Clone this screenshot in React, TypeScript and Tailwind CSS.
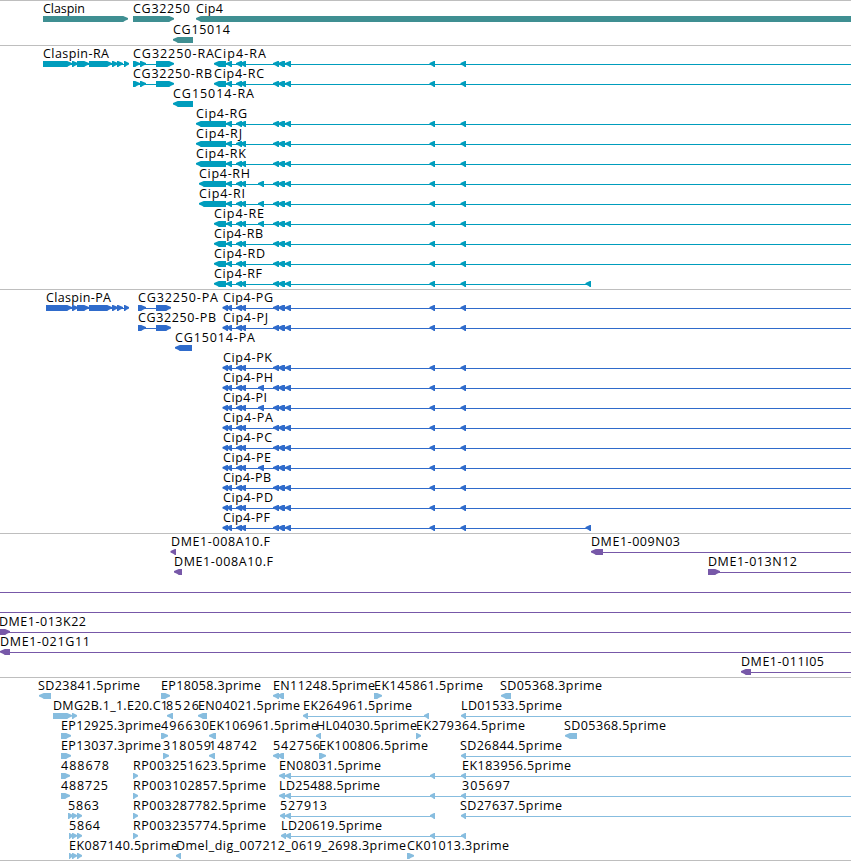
import React from "react";

type Label = [x: number, end: number, text: string];
type Glyph = [start: number, end: number, dir: "L" | "R"];
type Span = [start: number, end: number];
interface Row {
  labels?: Label[];
  glyphs?: Glyph[];
  lines?: Span[];
}

const WIDTH = 851;

// Exons shared by every Cip4 isoform.
const cip4Tail: Glyph[] = [
  [236, 242, "L"], [240, 246, "L"], [273, 279, "L"], [278, 285, "L"],
  [285, 291, "L"], [429.5, 435, "L"], [460.5, 466, "L"],
];
const extraExon: Glyph = [258, 264, "L"];

const cip4R = (suffix: string, start: number, end: number, extra = false, short = false): Row => ({
  labels: [[start, end, "Cip4-R" + suffix]],
  glyphs: [
    [start, 226, "L"], [226, 232, "L"], ...cip4Tail,
    ...(extra ? [extraExon] : []),
    ...(short ? [[585.5, 591, "L"] as Glyph] : []),
  ],
  lines: [[start + 5, short ? 590 : WIDTH]],
});

const cip4P = (suffix: string, end: number, extra = false, short = false): Row => ({
  labels: [[223, end, "Cip4-P" + suffix]],
  glyphs: [
    [222.5, 228, "L"], [226.5, 232, "L"], ...cip4Tail,
    ...(extra ? [extraExon] : []),
    ...(short ? [[585.5, 591, "L"] as Glyph] : []),
  ],
  lines: [[226, short ? 590 : WIDTH]],
});

const merge = (...rows: Row[]): Row => ({
  labels: rows.flatMap((r) => r.labels ?? []),
  glyphs: rows.flatMap((r) => r.glyphs ?? []),
  lines: rows.flatMap((r) => r.lines ?? []),
});

const claspin = (name: string, start: number, end: number): Row => ({
  labels: [[start, end, name]],
  glyphs: [
    [start, 72, "R"], [72, 78, "R"], [77, 89, "R"], [89, 112, "R"],
    [112, 118, "R"], [117, 123, "R"], [124, 129, "R"],
  ],
  lines: [[start + 3, 127]],
});

const cg32250R = (name: string, end: number): Row => ({
  labels: [[133, end, name]],
  glyphs: [[133, 140, "R"], [140, 146, "R"], [156, 174, "R"]],
  lines: [[134, 160]],
});

const cg32250P = (name: string, end: number): Row => ({
  labels: [[138, end, name]],
  glyphs: [[138, 146, "R"], [156, 171, "R"]],
  lines: [[139, 160]],
});

const genes: Row[] = [
  {
    labels: [[43, 85, "Claspin"], [133, 190, "CG32250"], [196, 223, "Cip4"]],
    glyphs: [[43, 128, "R"], [133, 174, "R"], [196, 860, "L"]],
  },
  { labels: [[173, 230, "CG15014"]], glyphs: [[173, 193, "L"]] },
];

const transcripts: Row[] = [
  merge(claspin("Claspin-RA", 43, 109), cg32250R("CG32250-RA", 214), cip4R("A", 214, 266)),
  merge(cg32250R("CG32250-RB", 212), cip4R("C", 214, 264)),
  { labels: [[173, 254, "CG15014-RA"]], glyphs: [[173, 193, "L"]] },
  cip4R("G", 196, 247),
  cip4R("J", 196, 242),
  cip4R("K", 196, 246),
  cip4R("H", 199, 250, true),
  cip4R("I", 199, 245, true),
  cip4R("E", 214, 264, true),
  cip4R("B", 214, 263),
  cip4R("D", 214, 265),
  cip4R("F", 214, 262, false, true),
];

const proteins: Row[] = [
  merge(claspin("Claspin-PA", 46, 111), cg32250P("CG32250-PA", 218), cip4P("G", 273)),
  merge(cg32250P("CG32250-PB", 216), cip4P("J", 268)),
  { labels: [[175, 255, "CG15014-PA"]], glyphs: [[175, 192, "L"]] },
  cip4P("K", 272),
  cip4P("H", 273, true),
  cip4P("I", 267, true),
  cip4P("A", 273),
  cip4P("C", 272),
  cip4P("E", 271, true),
  cip4P("B", 271),
  cip4P("D", 273),
  cip4P("F", 270, false, true),
];

const clones: Row[] = [
  {
    labels: [[171, 270, "DME1-008A10.F"], [591, 680, "DME1-009N03"]],
    glyphs: [[170.5, 176, "L"], [591, 603, "L"]],
    lines: [[600, WIDTH]],
  },
  {
    labels: [[174, 273, "DME1-008A10.F"], [708, 797, "DME1-013N12"]],
    glyphs: [[174, 182, "L"], [708, 720, "R"]],
    lines: [[714, WIDTH]],
  },
  { lines: [[0, WIDTH]] },
  { lines: [[0, WIDTH]] },
  { labels: [[-1, 86, "DME1-013K22"]], glyphs: [[-4, 10, "R"]], lines: [[0, WIDTH]] },
  { labels: [[0, 90, "DME1-021G11"]], glyphs: [[0, 10, "L"]], lines: [[4, WIDTH]] },
  { labels: [[741, 824, "DME1-011I05"]], glyphs: [[741, 751, "L"]], lines: [[748, WIDTH]] },
];

const reads: Row[] = [
  {
    labels: [
      [38, 140, "SD23841.5prime"], [161, 261, "EP18058.3prime"], [273, 375, "EN11248.5prime"],
      [374, 483, "EK145861.5prime"], [500, 602, "SD05368.3prime"],
    ],
    glyphs: [
      [39, 51, "L"], [161, 170, "R"], [273, 279, "L"], [277, 284, "L"], [374, 382, "R"], [501, 511, "L"],
    ],
  },
  {
    labels: [
      [53, 168, "DMG2B.1_1.E20.C1"], [166, 199, "8526"], [198, 300, "EN04021.5prime"],
      [303, 412, "EK264961.5prime"], [461, 562, "LD01533.5prime"],
    ],
    glyphs: [
      [53, 72, "R"], [72, 77, "R"], [167, 173, "L"], [198, 207, "L"], [303, 308, "L"], [424, 429, "L"],
      [461, 466, "L"],
    ],
    lines: [[307, 426], [464, WIDTH]],
  },
  {
    labels: [
      [61, 161, "EP12925.3prime"], [161, 209, "496630"], [209, 318, "EK106961.5prime"],
      [316, 417, "HL04030.5prime"], [416, 525, "EK279364.5prime"], [564, 666, "SD05368.5prime"],
    ],
    glyphs: [
      [61, 71, "R"], [161, 168, "R"], [209, 216, "L"], [316, 321, "L"], [416, 421, "R"], [565, 577, "L"],
    ],
  },
  {
    labels: [
      [61, 161, "EP13037.3prime"], [163, 211, "318059"], [209, 257, "148742"],
      [273, 320, "542756"], [319, 428, "EK100806.5prime"], [460, 562, "SD26844.5prime"],
    ],
    glyphs: [
      [61, 71, "R"], [163, 169, "R"], [209, 215, "L"], [273, 279, "L"], [277, 284, "L"], [319, 326, "R"],
      [461, 466, "L"],
    ],
    lines: [[464, WIDTH]],
  },
  {
    labels: [
      [61, 109, "488678"], [133, 266, "RP003251623.5prime"], [279, 381, "EN08031.5prime"],
      [462, 571, "EK183956.5prime"],
    ],
    glyphs: [
      [61, 70, "R"], [133, 138, "R"], [279, 285, "L"], [285, 291, "L"], [430, 435, "L"], [461, 466, "L"],
    ],
    lines: [[284, WIDTH]],
  },
  {
    labels: [
      [61, 108, "488725"], [133, 266, "RP003102857.5prime"], [279, 380, "LD25488.5prime"],
      [462, 510, "305697"],
    ],
    glyphs: [
      [61, 70, "R"], [133, 138, "R"], [279, 285, "L"], [285, 291, "L"], [430, 435, "L"], [461, 466, "L"],
    ],
    lines: [[284, WIDTH]],
  },
  {
    labels: [
      [68, 99, "5863"], [133, 266, "RP003287782.5prime"], [280, 327, "527913"],
      [460, 562, "SD27637.5prime"],
    ],
    glyphs: [
      [68, 73, "R"], [72, 77, "R"], [77, 82, "R"], [133, 138, "R"], [280, 285, "L"], [285, 291, "L"],
      [430, 435, "L"], [461, 466, "L"],
    ],
    lines: [[284, 434], [464, WIDTH]],
  },
  {
    labels: [[69, 100, "5864"], [133, 266, "RP003235774.5prime"], [281, 382, "LD20619.5prime"]],
    glyphs: [
      [69, 73, "R"], [72, 77, "R"], [77, 82, "R"], [133, 138, "R"], [281, 286, "L"], [285, 291, "L"],
      [430, 435, "L"], [461, 466, "L"],
    ],
    lines: [[285, 464]],
  },
  {
    labels: [
      [69, 178, "EK087140.5prime"], [176, 406, "Dmel_dig_007212_0619_2698.3prime"],
      [407, 509, "CK01013.3prime"],
    ],
    glyphs: [[69, 73, "R"], [72, 77, "R"], [77, 82, "R"], [176, 181, "L"], [407, 414, "R"]],
  },
];

// A feature box with a blunt pointed end in the direction of transcription.
function arrowPath([start, end, dir]: Glyph): string {
  const head = Math.min(6, end - start);
  const [tip, back, sign] = dir === "L" ? [start, end, 1] : [end, start, -1];
  const mid = tip + (sign * head) / 2;
  const neck = tip + sign * head * 0.8;
  return `${tip},18 ${mid},16.8 ${neck},16 ${back},16 ${back},22 ${neck},22 ${mid},20.8 ${tip},19.5`;
}

function FeatureRow({ row, height }: { row: Row; height: string }) {
  return (
    <div className={`${height} w-full shrink-0`}>
      <svg width={WIDTH} height={22} className="block overflow-visible">
        {row.lines?.map(([a, b], i) => (
          <rect key={i} x={a} y={19} width={b - a} height={1} fill="currentColor" />
        ))}
        {row.glyphs?.map((g, i) => (
          <polygon key={i} points={arrowPath(g)} fill="currentColor" />
        ))}
        {row.labels?.map(([x, end, text], i) => (
          <text key={i} x={x} y={13} textLength={end - x} fill="#000" fontSize={12.5}>
            {text}
          </text>
        ))}
      </svg>
    </div>
  );
}

function Track({ rows, color, size, rowHeight = "h-5" }: {
  rows: Row[];
  color: string;
  size: string;
  rowHeight?: string;
}) {
  return (
    <section className={`relative flex w-full shrink-0 flex-col ${size} ${color}`}>
      <div className="-mb-px h-px w-full shrink-0 bg-[#bebebe]" />
      {rows.map((row, i) => (
        <FeatureRow key={i} row={row} height={rowHeight} />
      ))}
    </section>
  );
}

export default function App() {
  return (
    <main className="flex h-[861px] w-[851px] flex-col overflow-hidden bg-white font-['Open_Sans',sans-serif]">
      <Track rows={genes} color="text-[#3f8f92]" size="h-[45px]" rowHeight="h-[21px]" />
      <Track rows={transcripts} color="text-[#009dbd]" size="h-[244px]" />
      <Track rows={proteins} color="text-[#2f6bcb]" size="h-[244px]" />
      <Track rows={clones} color="text-[#7758a8]" size="h-[144px]" />
      <Track rows={reads} color="text-[#87bddf]" size="h-[183px]" />
      <div className="h-px w-full shrink-0 bg-[#bebebe]" />
    </main>
  );
}
